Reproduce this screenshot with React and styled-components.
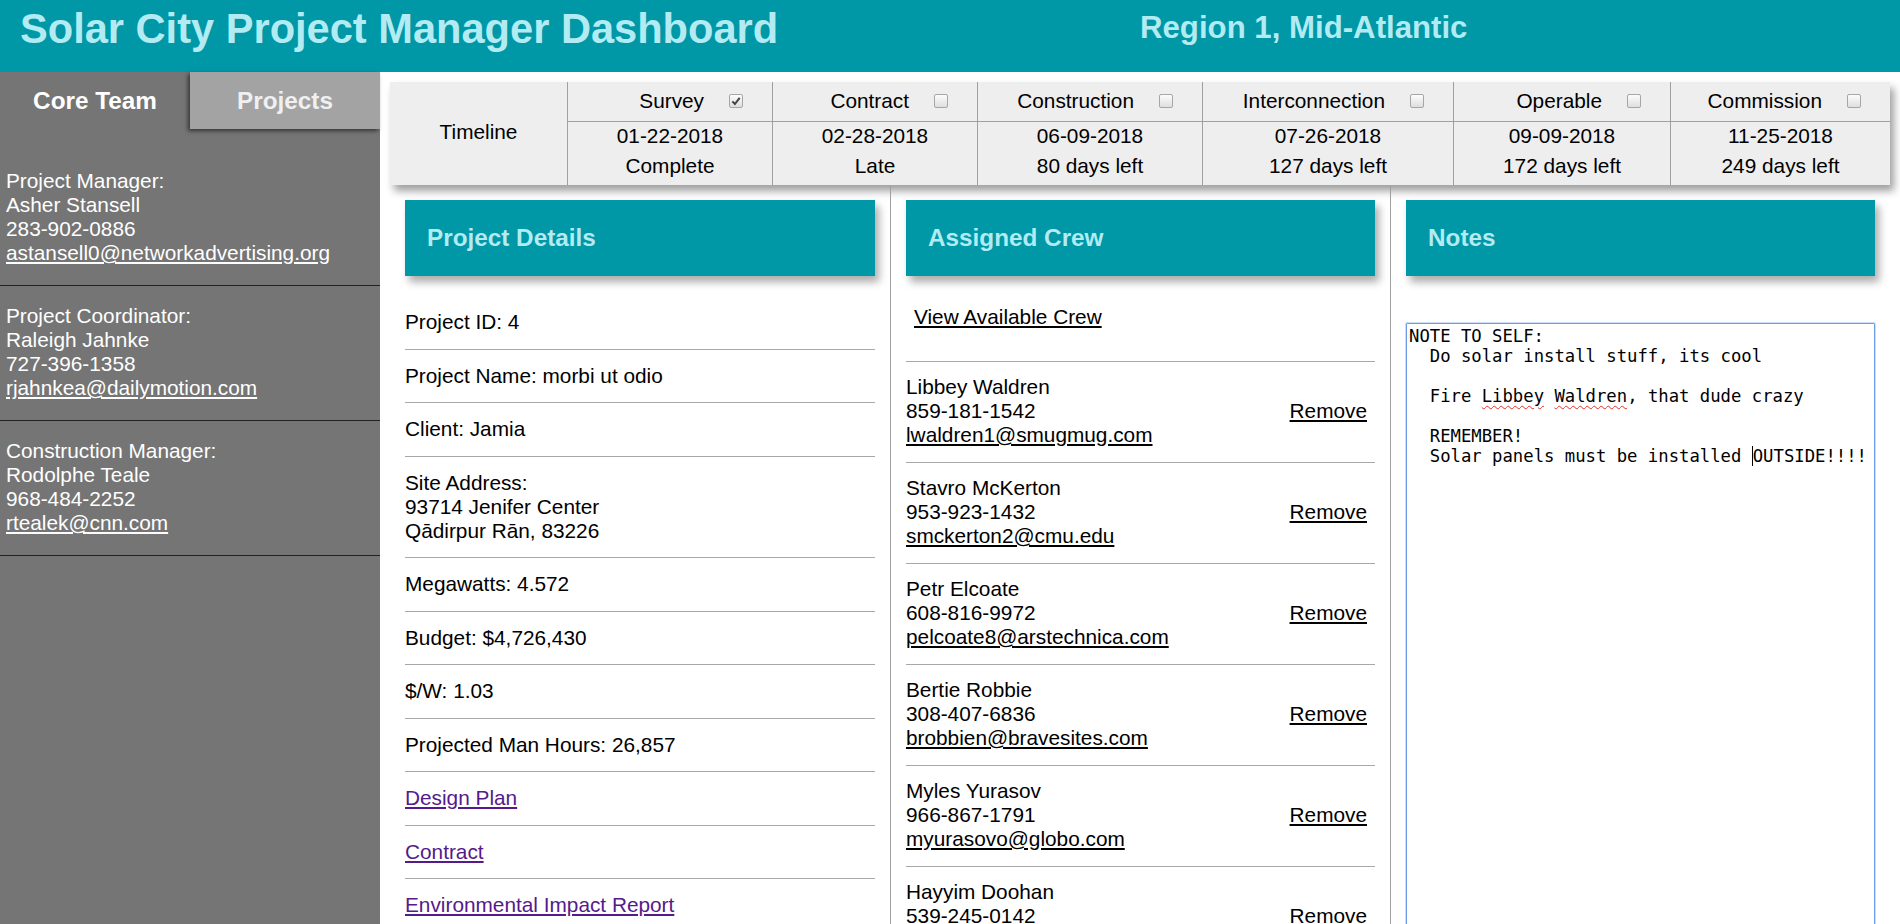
import React from "react";
import styled, { createGlobalStyle } from "styled-components";

const GlobalStyle = createGlobalStyle`
  *, *::before, *::after {
    box-sizing: border-box;
  }
  body {
    margin: 0;
    font-family: "Liberation Sans", Arial, sans-serif;
    font-size: 20.8px;
    color: #000;
    background: #fff;
  }
`;

const Page = styled.div`
  display: grid;
  grid-template-columns: 380px 1fr;
  grid-template-rows: 72px auto;
  min-height: 100vh;
`;

const Header = styled.header`
  grid-column: 1 / -1;
  display: grid;
  grid-template-columns: 60% 40%;
  align-items: start;
  padding-top: 5px;
  background: #0097a7;
  color: #b2ebf2;
`;

const Title = styled.h1`
  margin: 0;
  padding-left: 20px;
  font-size: 41.6px;
  font-weight: bold;
`;

const Region = styled.h2`
  margin: 5px 0 0;
  font-size: 31.2px;
  font-weight: bold;
`;

const Sidebar = styled.aside`
  background: #757575;
  color: #fff;
`;

const Tabs = styled.div`
  display: grid;
  grid-template-columns: 1fr 1fr;
  height: 57px;
`;

const Tab = styled.div`
  display: flex;
  align-items: center;
  justify-content: center;
  position: relative;
  font-size: 24.3px;
  font-weight: bold;
  background: ${(p) => (p.$active ? "#757575" : "#a3a3a3")};
  color: ${(p) => (p.$active ? "#fff" : "#f0f0f0")};
  box-shadow: ${(p) => (p.$active ? "none" : "-2px 2px 4px rgba(0, 0, 0, 0.55)")};
`;

const Contacts = styled.div`
  padding-top: 22px;
`;

const Contact = styled.div`
  display: flex;
  flex-direction: column;
  padding: 18px 6px 20px;
  line-height: 24px;
  border-bottom: 1px solid #222;
`;

const LightLink = styled.a`
  color: #fff;
  text-decoration: underline;
  align-self: flex-start;
`;

const Main = styled.main`
  padding: 10px 10px 0;
  min-width: 0;
`;

const Timeline = styled.div`
  display: grid;
  grid-template-columns: 177px 205px 205px 225px 251px 217px 1fr;
  height: 103px;
  background: #eee;
  box-shadow: 4px 6px 8px rgba(0, 0, 0, 0.38);
`;

const TimelineLabel = styled.div`
  display: flex;
  align-items: center;
  justify-content: center;
  padding-bottom: 3px;
`;

const Stage = styled.div`
  display: flex;
  flex-direction: column;
  border-left: 1px solid #a0a0a0;
`;

const StageHead = styled.div`
  display: flex;
  align-items: center;
  justify-content: flex-end;
  gap: 25px;
  height: 40px;
  padding-right: 29px;
  padding-bottom: 1px;
  border-bottom: 1px solid #a0a0a0;
`;

const StageBody = styled.div`
  margin-top: -1px;
  text-align: center;
  line-height: 30px;
`;

const Box = styled.span`
  display: inline-flex;
  align-items: center;
  justify-content: center;
  width: 14px;
  height: 14px;
  border: 1px solid #a6a6a6;
  border-radius: 2px;
  background: linear-gradient(#fcfcfc, #dedede);
`;

const Panels = styled.div`
  display: grid;
  grid-template-columns: repeat(3, 1fr);
`;

const Panel = styled.section`
  padding: 15px 15px 0;
  min-width: 0;
  & + & {
    border-left: 1px solid #a0a0a0;
  }
`;

const PanelTitle = styled.h3`
  display: flex;
  align-items: center;
  height: 76px;
  margin: 0 0 20px;
  padding-left: 22px;
  background: #0097a7;
  color: #b2ebf2;
  font-size: 24.3px;
  font-weight: bold;
  box-shadow: 4px 6px 8px rgba(0, 0, 0, 0.33);
`;

const DetailItem = styled.div`
  padding: 14.25px 0;
  line-height: 24px;
  & + & {
    border-top: 1px solid #a8a8a8;
  }
`;

const DocLink = styled.a`
  color: #551a8b;
  text-decoration: underline;
`;

const ViewCrew = styled.div`
  padding: 8.7px 8px 32px;
  line-height: 24px;
`;

const DarkLink = styled.a`
  color: #000;
  text-decoration: underline;
`;

const CrewItem = styled.div`
  display: flex;
  align-items: center;
  justify-content: space-between;
  padding: 13px 8px 15px 0;
  line-height: 24px;
  border-top: 1px solid #a8a8a8;
`;

const CrewInfo = styled.div`
  display: flex;
  flex-direction: column;
  align-items: flex-start;
`;

const NotesBox = styled.div`
  margin-top: 47px;
  height: 700px;
  padding: 2px;
  border: 1px solid #6d9de6;
  border-radius: 1px;
  outline: 1px solid rgba(109, 157, 230, 0.35);
  font-family: "DejaVu Sans Mono", monospace;
  font-size: 17.25px;
  line-height: 20px;
  white-space: pre-wrap;
`;

const Misspelled = styled.span`
  text-decoration: underline wavy #e0322f;
  text-decoration-thickness: 1px;
  text-underline-offset: 3px;
`;

const Caret = styled.span`
  display: inline-block;
  width: 0;
  height: 20px;
  vertical-align: top;
  border-left: 1px solid #000;
`;

const stages = [
  { name: "Survey", date: "01-22-2018", status: "Complete", done: true },
  { name: "Contract", date: "02-28-2018", status: "Late" },
  { name: "Construction", date: "06-09-2018", status: "80 days left" },
  { name: "Interconnection", date: "07-26-2018", status: "127 days left" },
  { name: "Operable", date: "09-09-2018", status: "172 days left" },
  { name: "Commission", date: "11-25-2018", status: "249 days left" },
];

const team = [
  { role: "Project Manager:", name: "Asher Stansell", phone: "283-902-0886", email: "astansell0@networkadvertising.org" },
  { role: "Project Coordinator:", name: "Raleigh Jahnke", phone: "727-396-1358", email: "rjahnkea@dailymotion.com" },
  { role: "Construction Manager:", name: "Rodolphe Teale", phone: "968-484-2252", email: "rtealek@cnn.com" },
];

const crew = [
  { name: "Libbey Waldren", phone: "859-181-1542", email: "lwaldren1@smugmug.com" },
  { name: "Stavro McKerton", phone: "953-923-1432", email: "smckerton2@cmu.edu" },
  { name: "Petr Elcoate", phone: "608-816-9972", email: "pelcoate8@arstechnica.com" },
  { name: "Bertie Robbie", phone: "308-407-6836", email: "brobbien@bravesites.com" },
  { name: "Myles Yurasov", phone: "966-867-1791", email: "myurasovo@globo.com" },
  { name: "Hayyim Doohan", phone: "539-245-0142", email: "hdoohanp@ucoz.ru" },
];

const Checkbox = ({ checked }) => (
  <Box>
    {checked && (
      <svg width="10" height="10" viewBox="0 0 9 9">
        <path d="M1.2 4.8 L3.5 7.2 L7.8 1.6" fill="none" stroke="#444" strokeWidth="1.8" />
      </svg>
    )}
  </Box>
);

const App = () => {
  return (
    <Page>
      <GlobalStyle />
      <Header>
        <Title>Solar City Project Manager Dashboard</Title>
        <Region>Region 1, Mid-Atlantic</Region>
      </Header>

      <Sidebar>
        <Tabs>
          <Tab $active>Core Team</Tab>
          <Tab>Projects</Tab>
        </Tabs>
        <Contacts>
          {team.map((m) => (
            <Contact key={m.email}>
              <span>{m.role}</span>
              <span>{m.name}</span>
              <span>{m.phone}</span>
              <LightLink href={"mailto:" + m.email}>{m.email}</LightLink>
            </Contact>
          ))}
        </Contacts>
      </Sidebar>

      <Main>
        <Timeline>
          <TimelineLabel>Timeline</TimelineLabel>
          {stages.map((s) => (
            <Stage key={s.name}>
              <StageHead>
                <span>{s.name}</span>
                <Checkbox checked={s.done} />
              </StageHead>
              <StageBody>
                <div>{s.date}</div>
                <div>{s.status}</div>
              </StageBody>
            </Stage>
          ))}
        </Timeline>

        <Panels>
          <Panel>
            <PanelTitle>Project Details</PanelTitle>
            <DetailItem>Project ID: 4</DetailItem>
            <DetailItem>Project Name: morbi ut odio</DetailItem>
            <DetailItem>Client: Jamia</DetailItem>
            <DetailItem>
              Site Address:
              <br />
              93714 Jenifer Center
              <br />
              Qādirpur Rān, 83226
            </DetailItem>
            <DetailItem>Megawatts: 4.572</DetailItem>
            <DetailItem>Budget: $4,726,430</DetailItem>
            <DetailItem>$/W: 1.03</DetailItem>
            <DetailItem>Projected Man Hours: 26,857</DetailItem>
            <DetailItem>
              <DocLink href="#">Design Plan</DocLink>
            </DetailItem>
            <DetailItem>
              <DocLink href="#">Contract</DocLink>
            </DetailItem>
            <DetailItem>
              <DocLink href="#">Environmental Impact Report</DocLink>
            </DetailItem>
          </Panel>

          <Panel>
            <PanelTitle>Assigned Crew</PanelTitle>
            <ViewCrew>
              <DarkLink href="#">View Available Crew</DarkLink>
            </ViewCrew>
            {crew.map((c) => (
              <CrewItem key={c.email}>
                <CrewInfo>
                  <span>{c.name}</span>
                  <span>{c.phone}</span>
                  <DarkLink href={"mailto:" + c.email}>{c.email}</DarkLink>
                </CrewInfo>
                <DarkLink href="#">Remove</DarkLink>
              </CrewItem>
            ))}
          </Panel>

          <Panel>
            <PanelTitle>Notes</PanelTitle>
            <NotesBox>
              {"NOTE TO SELF:\n  Do solar install stuff, its cool\n\n  Fire "}
              <Misspelled>Libbey</Misspelled> <Misspelled>Waldren</Misspelled>
              {", that dude crazy\n\n  REMEMBER!\n  Solar panels must be installed "}
              <Caret />
              {"OUTSIDE!!!!"}
            </NotesBox>
          </Panel>
        </Panels>
      </Main>
    </Page>
  );
};

export default App;
